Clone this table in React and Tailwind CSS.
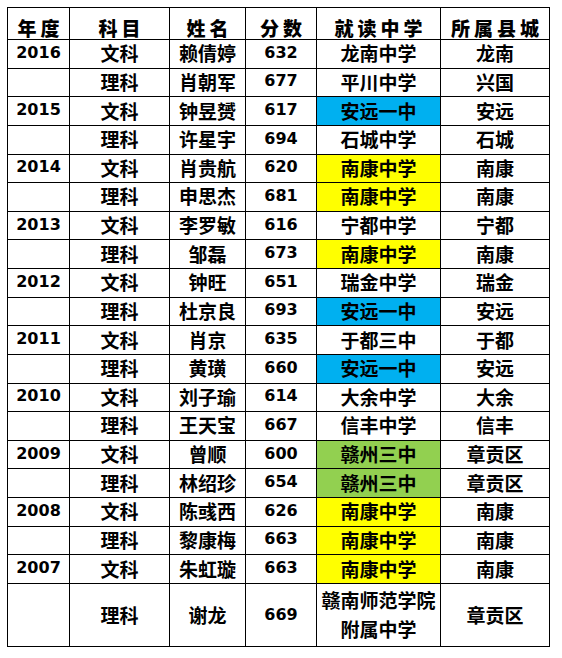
const rows = [
  ["2016", "文科", "赖倩婷", "632", "龙南中学", "龙南", ""],
  ["", "理科", "肖朝军", "677", "平川中学", "兴国", ""],
  ["2015", "文科", "钟昱赟", "617", "安远一中", "安远", "blue"],
  ["", "理科", "许星宇", "694", "石城中学", "石城", ""],
  ["2014", "文科", "肖贵航", "620", "南康中学", "南康", "yellow"],
  ["", "理科", "申思杰", "681", "南康中学", "南康", "yellow"],
  ["2013", "文科", "李罗敏", "616", "宁都中学", "宁都", ""],
  ["", "理科", "邹磊", "673", "南康中学", "南康", "yellow"],
  ["2012", "文科", "钟旺", "651", "瑞金中学", "瑞金", ""],
  ["", "理科", "杜京良", "693", "安远一中", "安远", "blue"],
  ["2011", "文科", "肖京", "635", "于都三中", "于都", ""],
  ["", "理科", "黄璜", "660", "安远一中", "安远", "blue"],
  ["2010", "文科", "刘子瑜", "614", "大余中学", "大余", ""],
  ["", "理科", "王天宝", "667", "信丰中学", "信丰", ""],
  ["2009", "文科", "曾顺", "600", "赣州三中", "章贡区", "green"],
  ["", "理科", "林绍珍", "654", "赣州三中", "章贡区", "green"],
  ["2008", "文科", "陈彧西", "626", "南康中学", "南康", "yellow"],
  ["", "理科", "黎康梅", "663", "南康中学", "南康", "yellow"],
  ["2007", "文科", "朱虹璇", "663", "南康中学", "南康", "yellow"],
];

const fills = {
  blue: "bg-[#00b0f0]",
  yellow: "bg-[#ffff00]",
  green: "bg-[#92d050]",
  "": "",
};

const cjk = "font-['Noto_Sans_CJK_SC',sans-serif] font-bold text-[19px]";
const num = "font-['DejaVu_Sans',sans-serif] font-bold text-[16px]";
const cell = "border border-black text-center align-middle p-0 leading-none";

export default function App() {
  return (
    <div className="bg-white w-[562px] h-[658px] pt-[7px] pl-[7px] text-black">
      <table className="border-collapse table-fixed w-[542px]">
        <colgroup>
          <col className="w-[62px]" />
          <col className="w-[100px]" />
          <col className="w-[76px]" />
          <col className="w-[71px]" />
          <col className="w-[124px]" />
          <col className="w-[109px]" />
        </colgroup>
        <thead>
          <tr className="h-[32px]">
            {["年度", "科目", "姓名", "分数", "就读中学", "所属县城"].map((h) => (
              <th
                key={h}
                className={`${cell} font-['Noto_Sans_CJK_SC',serif] font-black text-[19px] tracking-[4px] pt-[7px]`}
              >
                <span className="pl-[4px]">{h}</span>
              </th>
            ))}
          </tr>
        </thead>
        <tbody>
          {rows.map((r, i) => (
            <tr key={i} className="h-[28.63px]">
              <td className={`${cell} ${num} pb-[2px]`}>{r[0]}</td>
              <td className={`${cell} ${cjk} pb-[2px]`}>{r[1]}</td>
              <td className={`${cell} ${cjk} pb-[2px]`}>{r[2]}</td>
              <td className={`${cell} ${num} pb-[2px]`}>{r[3]}</td>
              <td className={`${cell} ${cjk} pb-[2px] ${fills[r[6]]}`}>{r[4]}</td>
              <td className={`${cell} ${cjk} pb-[2px]`}>{r[5]}</td>
            </tr>
          ))}
          <tr className="h-[63px]">
            <td className={`${cell} ${num}`}></td>
            <td className={`${cell} ${cjk}`}>理科</td>
            <td className={`${cell} ${cjk}`}>谢龙</td>
            <td className={`${cell} ${num}`}>669</td>
            <td className={`${cell} ${cjk}`}>
              <div className="leading-[28.6px]">赣南师范学院</div>
              <div className="leading-[28.6px]">附属中学</div>
            </td>
            <td className={`${cell} ${cjk}`}>章贡区</td>
          </tr>
        </tbody>
      </table>
    </div>
  );
}
